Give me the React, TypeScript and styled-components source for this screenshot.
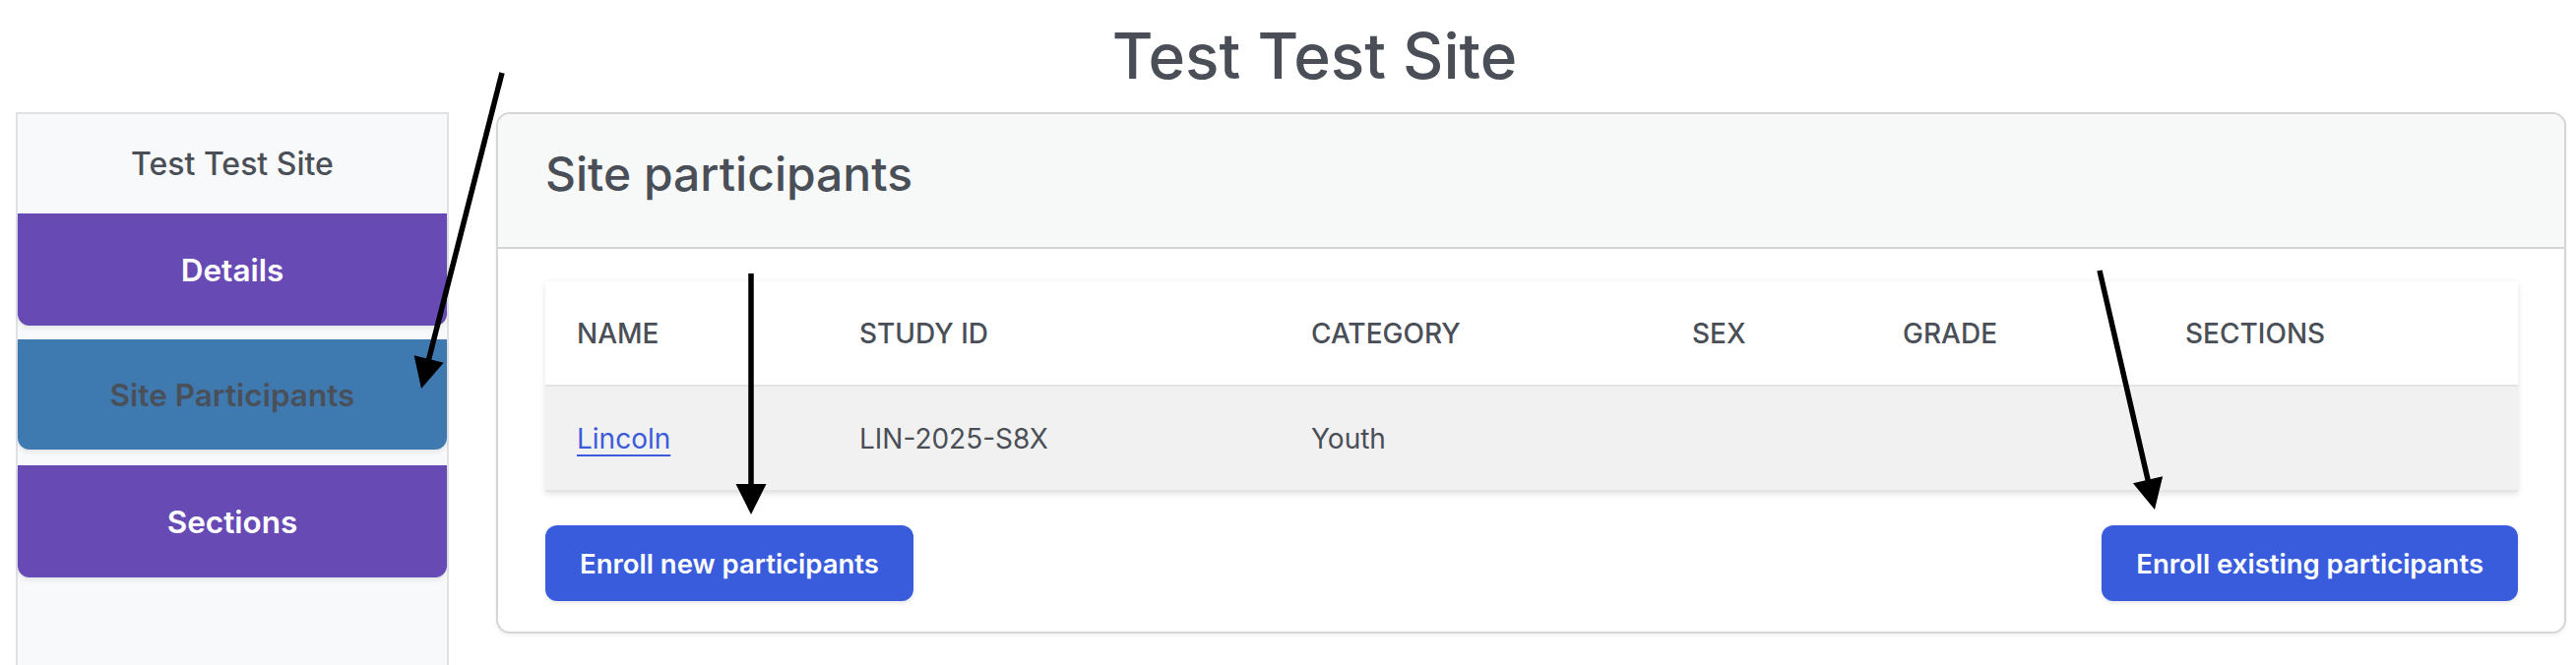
import React from "react";
import styled, { createGlobalStyle } from "styled-components";

const GlobalStyle = createGlobalStyle`
  html, body {
    margin: 0;
    padding: 0;
    overflow: hidden;
    background: #ffffff;
  }
  body {
    font-family: Inter, "Noto Sans", "Liberation Sans", sans-serif;
    color: #495057;
  }
  * { box-sizing: border-box; }
`;

const Page = styled.div`
  position: relative;
  width: 2617px;
  height: 676px;
  overflow: hidden;
`;

const Title = styled.h1`
  margin: 0;
  height: 114px;
  padding: 18px 0 0 54px;
  text-align: center;
  font-size: 64px;
  line-height: 78px;
  font-weight: 500;
  color: #4a4f57;
`;

const Main = styled.div`
  display: flex;
  align-items: flex-start;
  gap: 48px;
  padding: 0 10px 0 16px;
`;

const Sidebar = styled.nav`
  width: 440px;
  height: 600px;
  flex: none;
  display: flex;
  flex-direction: column;
  gap: 14px;
  background: #f8f9fa;
  border: 2px solid #dfe2e6;
`;

const SidebarTitle = styled.div`
  padding: 31px 0 31px;
  margin-bottom: -14px;
  text-align: center;
  font-size: 32px;
  font-weight: 500;
  color: #4a4f57;
`;

const NavButton = styled.div<{ $active?: boolean }>`
  height: ${(p) => (p.$active ? 112 : 114)}px;
  margin-bottom: ${(p) => (p.$active ? 2 : 0)}px;
  display: flex;
  align-items: center;
  justify-content: center;
  border-radius: 0 0 12px 12px;
  background: ${(p) => (p.$active ? "#3e7ab0" : "#684ab5")};
  color: ${(p) => (p.$active ? "#4a5059" : "#ffffff")};
  font-size: 31.5px;
  font-weight: 600;
  box-shadow: 0 3px 5px rgba(0, 0, 0, 0.08);
`;

const Card = styled.section`
  flex: 1;
  min-width: 0;
  background: #ffffff;
  border: 2px solid #d6d6d6;
  border-radius: 14px;
  overflow: hidden;
  box-shadow: 0 2px 4px rgba(0, 0, 0, 0.06);
`;

const CardHeader = styled.header`
  height: 137px;
  padding: 31px 48px 0;
  background: #f7f8f8;
  border-bottom: 2px solid #d4d4d4;
`;

const CardTitle = styled.h2`
  margin: 0;
  font-size: 48px;
  font-weight: 500;
  color: #4a4f57;
`;

const CardBody = styled.div`
  padding: 33px 47px 31px 48px;
`;

const TableWrap = styled.div`
  box-shadow: 0 2px 6px rgba(0, 0, 0, 0.12);
`;

const Table = styled.table`
  width: 100%;
  table-layout: fixed;
  border-collapse: collapse;
`;

const Th = styled.th`
  height: 106px;
  padding: 0 32px;
  text-align: left;
  font-size: 28px;
  font-weight: 500;
  text-transform: uppercase;
  color: #4a4f57;
  background: #ffffff;
  border-bottom: 2px solid #e1e4e8;
`;

const Td = styled.td`
  height: 107px;
  padding: 0 32px;
  font-size: 28px;
  font-weight: 400;
  color: #4a4f57;
  background: #f1f1f1;
  border-bottom: 2px solid #e3e5e8;
`;

const NameLink = styled.a`
  color: #3b5bdb;
  text-decoration: underline;
  text-decoration-thickness: 2px;
  text-underline-offset: 6px;
`;

const Actions = styled.div`
  display: flex;
  justify-content: space-between;
  margin-top: 34px;
`;

const Button = styled.button`
  height: 77px;
  padding: 0 35px;
  border: none;
  border-radius: 12px;
  background: #395cdc;
  color: #ffffff;
  font-family: inherit;
  font-size: 27.5px;
  font-weight: 600;
  box-shadow: 0 2px 4px rgba(0, 0, 0, 0.1);
`;

const Overlay = styled.svg`
  position: absolute;
  left: 0;
  top: 0;
  pointer-events: none;
`;

type ArrowProps = { x1: number; y1: number; x2: number; y2: number; h?: number; w?: number };

function Arrow({ x1, y1, x2, y2, h = 31, w = 15.5 }: ArrowProps) {
  const dx = x2 - x1;
  const dy = y2 - y1;
  const len = Math.hypot(dx, dy);
  const ux = dx / len;
  const uy = dy / len;
  const bx = x2 - ux * h;
  const by = y2 - uy * h;
  const nx = -uy * w;
  const ny = ux * w;
  return (
    <g>
      <line x1={x1} y1={y1} x2={bx + ux * 2} y2={by + uy * 2} stroke="#000" strokeWidth={5.5} />
      <polygon points={`${x2},${y2} ${bx + nx},${by + ny} ${bx - nx},${by - ny}`} fill="#000" />
    </g>
  );
}

const columns = [
  { key: "name", label: "Name", width: 287 },
  { key: "study", label: "Study ID", width: 459 },
  { key: "category", label: "Category", width: 387 },
  { key: "sex", label: "Sex", width: 214 },
  { key: "grade", label: "Grade", width: 287 },
  { key: "sections", label: "Sections", width: 370 },
];

export default function App() {
  return (
    <Page>
      <GlobalStyle />
      <Title>Test Test Site</Title>
      <Main>
        <Sidebar>
          <SidebarTitle>Test Test Site</SidebarTitle>
          <NavButton>Details</NavButton>
          <NavButton $active>Site Participants</NavButton>
          <NavButton>Sections</NavButton>
        </Sidebar>
        <Card>
          <CardHeader>
            <CardTitle>Site participants</CardTitle>
          </CardHeader>
          <CardBody>
            <TableWrap>
              <Table>
                <colgroup>
                  {columns.map((c) => (
                    <col key={c.key} style={{ width: c.width }} />
                  ))}
                </colgroup>
                <thead>
                  <tr>
                    {columns.map((c) => (
                      <Th key={c.key}>{c.label}</Th>
                    ))}
                  </tr>
                </thead>
                <tbody>
                  <tr>
                    <Td>
                      <NameLink href="#">Lincoln</NameLink>
                    </Td>
                    <Td>LIN-2025-S8X</Td>
                    <Td>Youth</Td>
                    <Td></Td>
                    <Td></Td>
                    <Td></Td>
                  </tr>
                </tbody>
              </Table>
            </TableWrap>
            <Actions>
              <Button>Enroll new participants</Button>
              <Button>Enroll existing participants</Button>
            </Actions>
          </CardBody>
        </Card>
      </Main>
      <Overlay width={2617} height={676} viewBox="0 0 2617 676">
        <Arrow x1={510} y1={74} x2={428} y2={395} />
        <Arrow x1={763} y1={278} x2={763} y2={523} />
        <Arrow x1={2133} y1={275} x2={2189} y2={518} />
      </Overlay>
    </Page>
  );
}
